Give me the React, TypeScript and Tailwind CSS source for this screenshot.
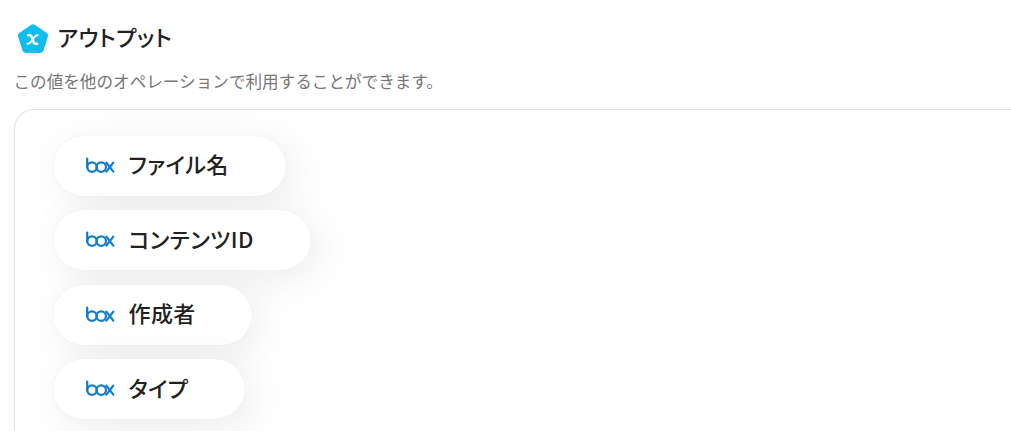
import React from "react";

interface OutputItem {
  id: string;
  label: string;
  width: string;
}

const outputs: OutputItem[] = [
  { id: "fileName", label: "ファイル名", width: "w-[233px]" },
  { id: "contentId", label: "コンテンツID", width: "w-[258px]" },
  { id: "creator", label: "作成者", width: "w-[199px]" },
  { id: "type", label: "タイプ", width: "w-[192px]" },
];

function BoxLogo() {
  return (
    <svg
      viewBox="0 0 30 18"
      className="w-[30px] h-[18px] shrink-0"
      fill="none"
      stroke="#0f7ccf"
      strokeWidth="2.2"
      strokeLinecap="round"
      strokeLinejoin="round"
    >
      <path d="M2.2 1.6V10.3" />
      <circle cx="7" cy="10.1" r="4.8" />
      <circle cx="16.2" cy="10.1" r="4.8" />
      <path d="M21.4 5.6L28.3 14.7M28.3 5.6L21.4 14.7" />
    </svg>
  );
}

function VariableIcon() {
  return (
    <svg viewBox="0 0 32 32" className="w-8 h-8 shrink-0">
      <path
        d="M14.2 1.7Q16 .6 17.8 1.7L29.7 10.1Q31.5 11.4 30.9 13.5L26.5 27.6Q25.7 30 23.2 30H8.8Q6.3 30 5.5 27.6L1.1 13.5Q.5 11.4 2.3 10.1Z"
        fill="#11bdef"
      />
      <path
        d="M11.3 12.2H12.6C13.7 12.2 14.2 12.7 14.6 13.8L16.7 19.2C17.1 20.3 17.6 20.8 18.7 20.8H20"
        fill="none"
        stroke="#fff"
        strokeWidth="2.6"
        strokeLinecap="round"
      />
      <path
        d="M20.8 12.2H20.2C19.2 12.2 18.7 12.6 18 13.5L13.3 19.5C12.6 20.4 12.1 20.8 11.1 20.8H10.6"
        fill="none"
        stroke="#fff"
        strokeWidth="2"
        strokeLinecap="round"
      />
    </svg>
  );
}

export default function App() {
  return (
    <div className="h-[431px] overflow-hidden bg-white pl-[14px] pt-[23px] font-['Noto_Sans_CJK_JP',sans-serif] text-[#222]">
      {/* Header Section */}
      <div className="flex h-8 items-center gap-[9px] pl-[2.5px]">
        <VariableIcon />
        <h1 className="mb-1.5 text-[22px] leading-8 font-medium tracking-[0.5px] whitespace-nowrap [font-feature-settings:'palt']">
          アウトプット
        </h1>
      </div>
      <p className="mt-[14px] -ml-[0.5px] h-6 text-[16.6px] leading-6 whitespace-nowrap text-[#777]">
        この値を他のオペレーションで利用することができます。
      </p>

      {/* Output List */}
      <div className="mt-4 h-[400px] rounded-tl-[20px] border-t border-l border-[#e2e2e2] pt-[25.5px] pl-[38px]">
        <div className="flex flex-col items-start gap-[14.5px]">
          {outputs.map((output) => (
            <div
              key={output.id}
              className={`flex h-[60px] items-center rounded-full bg-white pl-8 shadow-[0_0_1px_rgba(0,0,0,0.12),8px_8px_40px_rgba(0,0,0,0.08)] ${output.width}`}
            >
              <BoxLogo />
              <span className="mb-[5px] ml-[13.5px] text-[22px] leading-8 font-medium tracking-[0.4px] whitespace-nowrap [font-feature-settings:'palt']">
                {output.label}
              </span>
            </div>
          ))}
        </div>
      </div>
    </div>
  );
}
